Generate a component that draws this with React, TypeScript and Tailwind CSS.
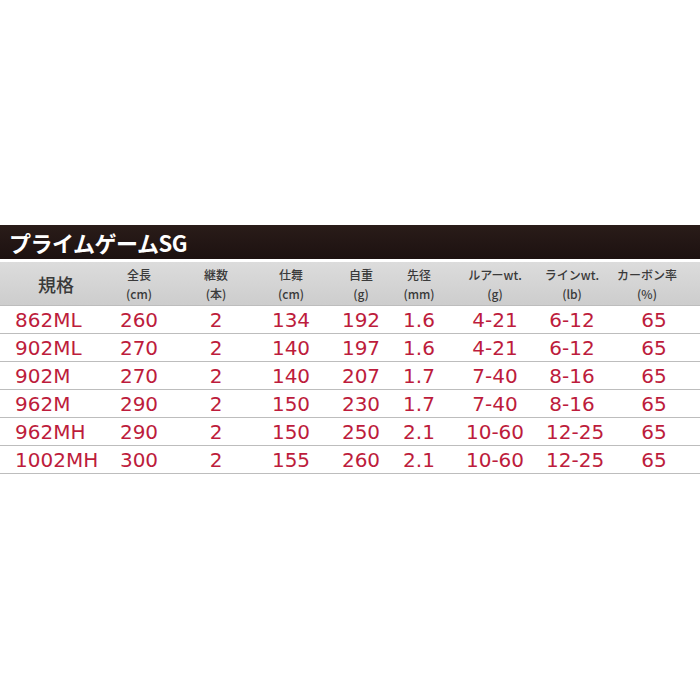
const cols = ["w-[100px]", "w-[78px]", "w-[76px]", "w-[74px]", "w-[66px]", "w-[50px]", "w-[102px]", "w-[52px]", "w-[102px]"];

const headers: [string, string | null][] = [
  ["規格", null],
  ["全長", "(cm)"],
  ["継数", "(本)"],
  ["仕舞", "(cm)"],
  ["自重", "(g)"],
  ["先径", "(mm)"],
  ["ルアーwt.", "(g)"],
  ["ラインwt.", "(lb)"],
  ["カーボン率", "(%)"],
];

const rows = [
  ["862ML", "260", "2", "134", "192", "1.6", "4-21", "6-12", "65"],
  ["902ML", "270", "2", "140", "197", "1.6", "4-21", "6-12", "65"],
  ["902M", "270", "2", "140", "207", "1.7", "7-40", "8-16", "65"],
  ["962M", "290", "2", "150", "230", "1.7", "7-40", "8-16", "65"],
  ["962MH", "290", "2", "150", "250", "2.1", "10-60", "12-25", "65"],
  ["1002MH", "300", "2", "155", "260", "2.1", "10-60", "12-25", "65"],
];

export default function App() {
  return (
    <div className="h-[700px] w-[700px] bg-white pt-[225px] font-['Noto_Sans_CJK_JP',sans-serif]">
      <div className="flex h-[34px] items-center bg-gradient-to-b from-[#2a1c19] to-[#1c1110] pl-[9px]">
        <span className="text-[22px] font-bold leading-none tracking-[-0.5px] text-white">プライムゲームSG</span>
      </div>
      <div className="mt-[3px] flex h-[43px] items-center bg-gradient-to-b from-[#dcdcdc] to-[#cdcdcd] text-[#3a3a3a]">
        {headers.map(([a, b], i) => (
          <div key={i} className={`${cols[i]} flex shrink-0 flex-col items-center whitespace-nowrap ${i === 0 ? "pl-[12px]" : ""} ${i === 8 ? "pr-[4px]" : ""}`}>
            {b === null ? (
              <span className="text-[18px] font-medium leading-none">{a}</span>
            ) : (
              <>
                <span className="text-[12px] font-medium leading-[19px]">{a}</span>
                <span className="text-[12px] font-medium leading-[19px]">{b}</span>
              </>
            )}
          </div>
        ))}
      </div>
      <div className="border-t border-[#bdbdbd]">
        {rows.map((r, ri) => (
          <div key={ri} className="flex h-[28px] items-center border-b border-[#bdbdbd] font-['DejaVu_Sans',sans-serif] text-[20px] leading-none text-[#bd1c3c]">
            {r.map((c, i) => (
              <div key={i} className={`${cols[i]} shrink-0 whitespace-nowrap ${i === 0 ? "pl-[15px] text-left" : "text-center"} ${i === 8 ? "pl-[10px]" : ""}`}>
                {c}
              </div>
            ))}
          </div>
        ))}
      </div>
    </div>
  );
}
